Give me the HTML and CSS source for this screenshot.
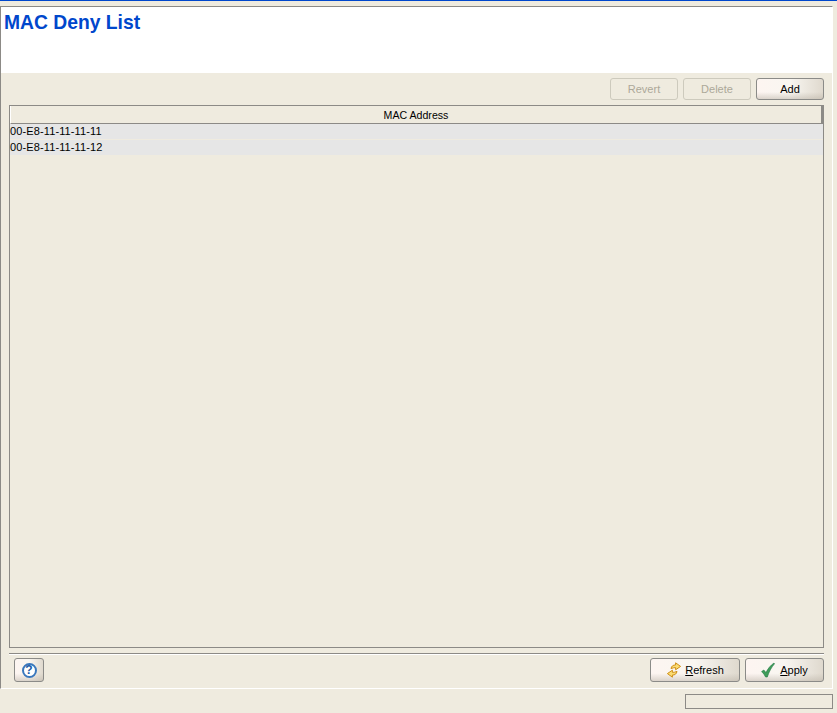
FILE: index.html
```html
<!DOCTYPE html>
<html lang="en">
<head>
<meta charset="utf-8">
<title>MAC Deny List</title>
<link rel="stylesheet" href="styles.css">
</head>
<body>
<div class="page">
  <div class="top-line"></div>
  <main class="panel">
    <header class="title-area"><h1 class="title">MAC Deny List</h1></header>
    <section class="content">
      <div class="toolbar">
        <button class="btn btn-small" disabled>Revert</button>
        <button class="btn btn-small" disabled>Delete</button>
        <button class="btn btn-small">Add</button>
      </div>
      <div class="table">
        <div class="table-head">MAC Address</div>
        <div class="table-row">00-E8-11-11-11-11</div>
        <div class="table-row">00-E8-11-11-11-12</div>
      </div>
      <div class="separator"></div>
      <div class="footer">
        <button class="btn btn-help"><span class="help-icon">?</span></button>
        <div class="footer-right">
          <button class="btn btn-refresh">
            <svg class="icon" width="16" height="16" viewBox="0 0 16 16">
              <path d="M5 6.6 C5.4 4.2 7.2 2.8 9.6 3 L9.6 0.8 L14.6 4.4 L9.6 7.8 L9.6 5.6 C8 5.6 6.8 5.9 5 6.6 Z" fill="#fbdc72" stroke="#cf8f18" stroke-width="1" stroke-linejoin="round"/>
              <path d="M11 9.4 C10.6 11.8 8.8 13.2 6.4 13 L6.4 15.2 L1.4 11.6 L6.4 8.2 L6.4 10.4 C8 10.4 9.2 10.1 11 9.4 Z" fill="#fbdc72" stroke="#cf8f18" stroke-width="1" stroke-linejoin="round"/>
            </svg>
            <span><u>R</u>efresh</span>
          </button>
          <button class="btn btn-apply">
            <svg class="icon icon-check" width="14" height="16" viewBox="0 0 14 16">
              <path d="M0.6 9.6 L2.8 8 L5 10.6 C6.8 6.8 9.4 3.4 13 1 L13.5 1.8 C10.4 5.4 8 9.8 6.3 15 L4.6 15 C3.6 12.8 2.2 11 0.6 9.6 Z" fill="#3f9d5a" stroke="#1d7540" stroke-width=".6" stroke-linejoin="round"/>
            </svg>
            <span><u>A</u>pply</span>
          </button>
        </div>
      </div>
    </section>
  </main>
  <div class="statusbar"><div class="status-field"></div></div>
</div>
</body>
</html>
```

FILE: styles.css
```css
* { box-sizing: border-box; }
html, body { margin: 0; padding: 0; }
body {
  background: #efebdf;
  font-family: "Liberation Sans", Arial, sans-serif;
  font-size: 11px;
  color: #000;
}
.page { width: 837px; height: 713px; display: flex; flex-direction: column; overflow: hidden; }
.top-line { height: 1px; background: #0047cc; margin-bottom: 5px; flex: none; }
.panel {
  width: 833px;
  height: 683px;
  flex: none;
  display: flex;
  flex-direction: column;
  border-top: 1px solid #8c8a86;
  border-left: 1px solid #8c8a86;
  border-right: 1px solid #fff;
  border-bottom: 1px solid #fff;
}
.title-area { height: 66px; background: #fff; flex: none; padding: 4px 0 0 3px; }
.title { margin: 0; font-size: 19.3px; line-height: 23px; font-weight: bold; color: #0047cc; }
.content { flex: 1; display: flex; flex-direction: column; padding: 5px 8px 5px 8px; }
.toolbar { display: flex; justify-content: flex-end; gap: 5px; height: 22px; flex: none; margin-bottom: 5px; }
.btn {
  font: 11px "Liberation Sans", Arial, sans-serif;
  color: #000;
  padding: 0;
  border: 1px solid #8b8b88;
  border-radius: 3px;
  background:
    linear-gradient(180deg, rgba(255,255,255,0) 65%, rgba(185,177,165,.5) 100%),
    linear-gradient(90deg, #fdf5f1 0%, #f9f6f1 50%, #dfd9ce 100%);
  display: flex;
  align-items: center;
  justify-content: center;
}
.btn:disabled { background: transparent; border-color: #cdcabd; color: #aca899; }
.btn-small { width: 68px; height: 22px; }
.table {
  height: 543px;
  flex: none;
  border: 1px solid #8c8a86;
  display: flex;
  flex-direction: column;
  gap: 1px;
}
.table-head {
  height: 18px;
  flex: none;
  text-align: center;
  font-size: 10.6px;
  line-height: 18px;
  border-left: 1px solid #fff;
  border-right: 2px solid #8c8a86;
  border-bottom: 1px solid #8c8a86;
  margin-bottom: -1px;
}
.table-row { height: 15px; flex: none; line-height: 15px; background: #e6e6e6; padding-left: 0; letter-spacing: .12px; }
.separator { height: 2px; flex: none; margin-top: 5px; border-top: 1px solid #8c8a86; border-bottom: 1px solid #fff; }
.footer { display: flex; justify-content: space-between; margin-top: 3px; padding-left: 5px; height: 24px; flex: none; }
.footer-right { display: flex; gap: 5px; }
.btn-help { width: 30px; height: 24px; }
.help-icon {
  width: 15px;
  height: 15px;
  border: 2px solid #3a78bd;
  border-radius: 50%;
  background: #fff;
  color: #1a5aa6;
  font-weight: bold;
  font-size: 12px;
  line-height: 11px;
  text-align: center;
}
.btn-refresh { width: 90px; height: 24px; gap: 3px; }
.btn-apply { width: 79px; height: 24px; gap: 5px; }
.icon { flex: none; }
.statusbar { flex: 1; display: flex; justify-content: flex-end; padding: 5px 4px 0 0; }
.status-field { width: 148px; height: 15px; border: 1px solid #8c8a86; }
```
